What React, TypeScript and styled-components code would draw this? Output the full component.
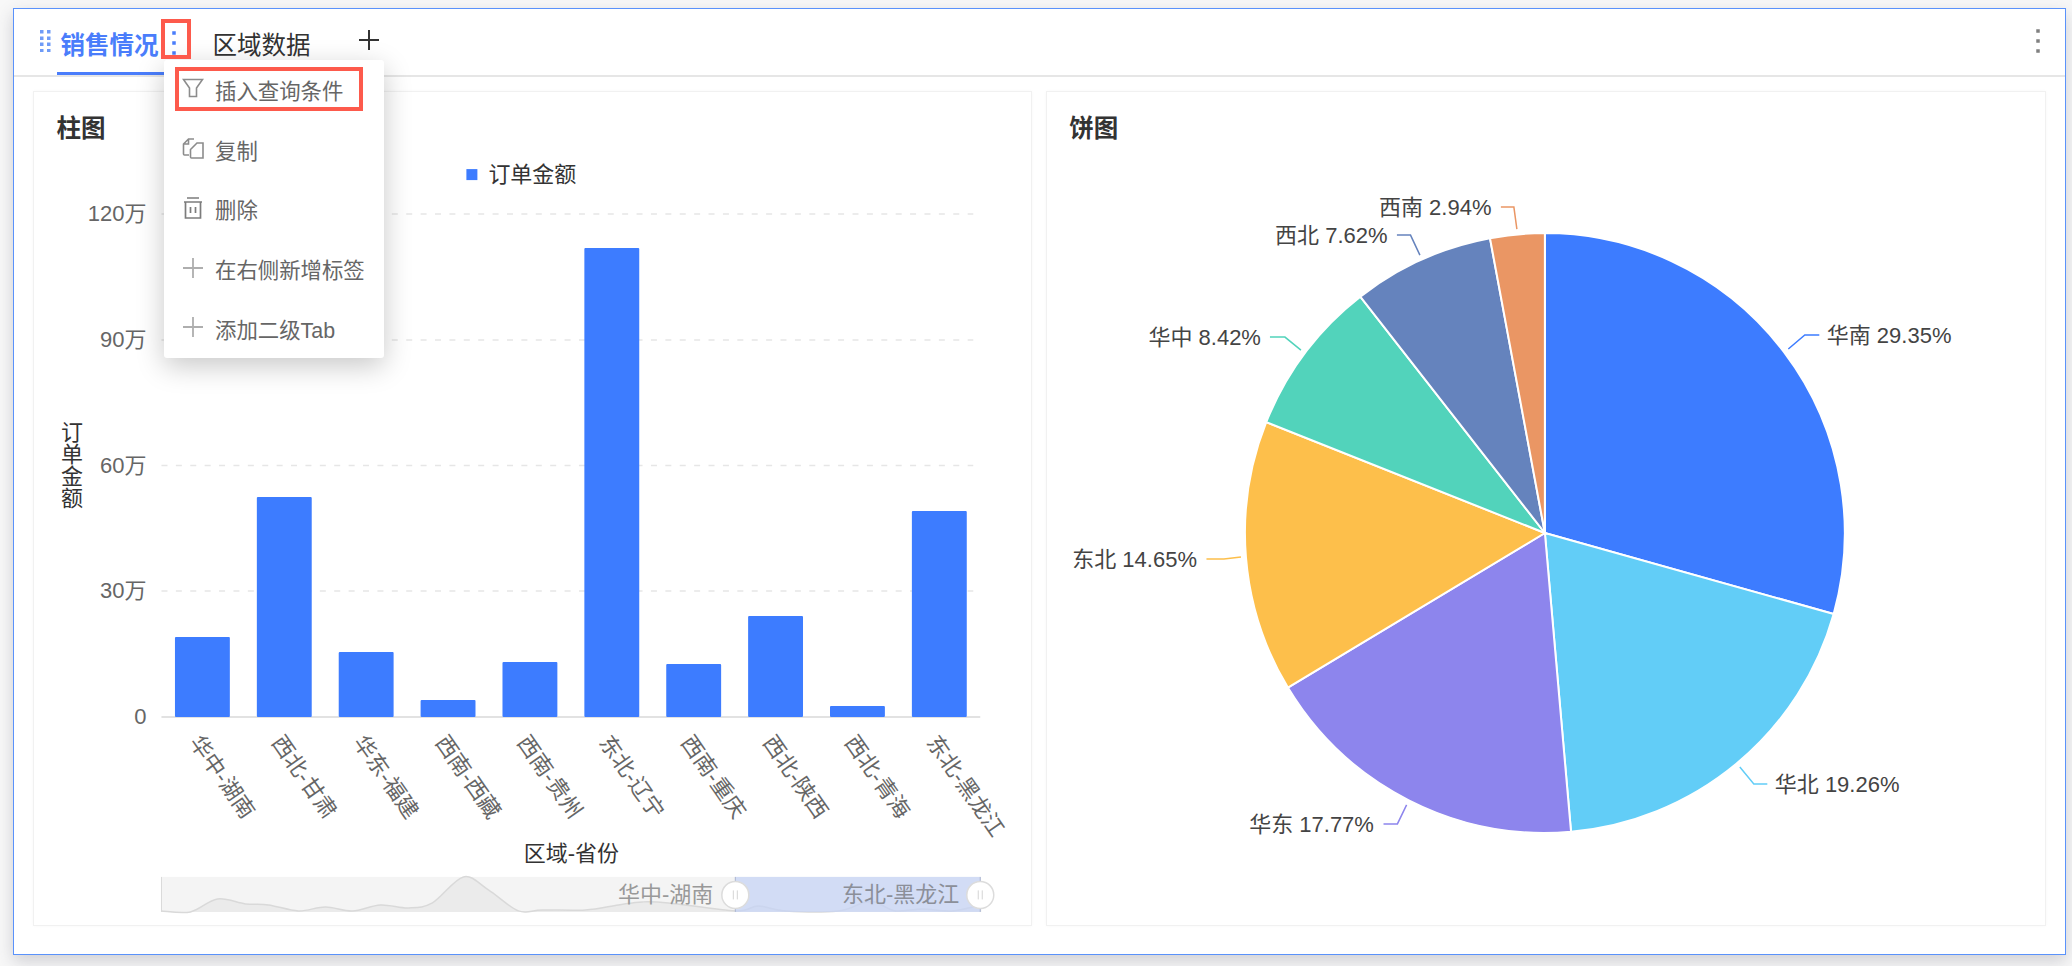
import React from 'react';
import styled, { createGlobalStyle } from 'styled-components';

const FONT = '"Liberation Sans", "Noto Sans CJK SC", sans-serif';
const BLUE = '#3d7cff';
const TAB_BLUE = '#4a7dfb';
const RED = '#fd5a4c';

const GlobalStyle = createGlobalStyle`
  html, body {
    margin: 0;
    padding: 0;
    background: #f8f8f8;
  }
  * {
    box-sizing: border-box;
  }
`;

const Page = styled.div`
  width: 2072px;
  height: 966px;
  padding: 8px 6px 11px 13px;
  overflow: hidden;
  font-family: ${FONT};
`;

const Panel = styled.section`
  position: relative;
  height: 100%;
  display: flex;
  flex-direction: column;
  background: #fff;
  border: 1.5px solid #5a92fb;
  box-shadow: 0 6px 16px rgba(60, 60, 80, 0.22);
`;

const TabBar = styled.header`
  height: 68px;
  flex: none;
  display: flex;
  align-items: flex-start;
  padding-left: 26px;
  border-bottom: 2px solid #e6e6e6;
`;

const Grip = styled.svg`
  width: 11px;
  height: 22px;
  margin-top: 21px;
  flex: none;
`;

const TabLabel = styled.div<{ $active?: boolean }>`
  position: relative;
  height: 66px;
  padding-top: 19px;
  font-size: 24.5px;
  line-height: 36px;
  white-space: nowrap;
  font-weight: ${(props) => (props.$active ? 700 : 400)};
  color: ${(props) => (props.$active ? TAB_BLUE : '#333')};
  margin-left: ${(props) => (props.$active ? '9.500px' : '36px')};

  &::after {
    content: '';
    display: ${(props) => (props.$active ? 'block' : 'none')};
    position: absolute;
    left: -4px;
    right: -8px;
    bottom: 0;
    height: 3px;
    background: ${TAB_BLUE};
  }
`;

const DotsButton = styled.svg`
  width: 6px;
  height: 26px;
  margin: 21px 0 0 12px;
  flex: none;
`;

const AddTab = styled.svg`
  width: 20px;
  height: 20px;
  margin: 21px 0 0 48px;
  flex: none;
`;

const PanelMenu = styled.svg`
  width: 6px;
  height: 26px;
  margin: 19px 24px 0 auto;
  flex: none;
`;

const Charts = styled.div`
  flex: 1;
  min-height: 0;
  display: grid;
  grid-template-columns: 1fr 1fr;
  gap: 14px;
  padding: 14px 19px 28px 18.5px;
`;

const Card = styled.article`
  display: flex;
  flex-direction: column;
  min-width: 0;
  background: #fff;
  border: 1px solid #f1f1f1;
  box-shadow: 0 0 3px rgba(0, 0, 0, 0.03);
`;

const CardTitle = styled.h3<{ $left: number }>`
  margin: 0;
  height: 64px;
  flex: none;
  padding: 18.5px 0 0 ${(props) => props.$left}px;
  font-size: 24.5px;
  line-height: 36px;
  font-weight: 700;
  color: #333;
`;

const ChartSvg = styled.svg`
  display: block;
  width: 100%;
  flex: 1;
  min-height: 0;
  font-family: ${FONT};
`;

const Menu = styled.ul`
  position: absolute;
  left: 150px;
  top: 51px;
  width: 220px;
  height: 298px;
  margin: 0;
  padding: 1px 0 0;
  list-style: none;
  background: #fff;
  border-radius: 3px;
  box-shadow: 0 8px 28px rgba(0, 0, 0, 0.22);
`;

const MenuItem = styled.li`
  height: 59.6px;
  display: flex;
  align-items: center;
  padding-left: 18px;
  font-size: 21.4px;
  color: #666;
  white-space: nowrap;
`;

const MenuIcon = styled.svg`
  width: 22px;
  height: 24px;
  margin: -4px 11px 0 0;
  flex: none;
`;

const MenuText = styled.span`
  margin-top: -2px;
`;

const Highlight = styled.div<{ $left: number; $top: number; $width: number; $height: number }>`
  position: absolute;
  left: ${(props) => props.$left}px;
  top: ${(props) => props.$top}px;
  width: ${(props) => props.$width}px;
  height: ${(props) => props.$height}px;
  border: 4px solid ${RED};
  pointer-events: none;
`;

const yTicks = [
  { label: '120万', y: 214 },
  { label: '90万', y: 340 },
  { label: '60万', y: 465.5 },
  { label: '30万', y: 591 },
];

const bars = [
  { name: '华中-湖南', top: 637 },
  { name: '西北-甘肃', top: 497 },
  { name: '华东-福建', top: 652 },
  { name: '西南-西藏', top: 700 },
  { name: '西南-贵州', top: 662 },
  { name: '东北-辽宁', top: 248 },
  { name: '西南-重庆', top: 664 },
  { name: '西北-陕西', top: 616 },
  { name: '西北-青海', top: 706 },
  { name: '东北-黑龙江', top: 511 },
];

const sparkPoints: [number, number][] = [
  [161, 911], [190, 912], [217, 899], [245, 904], [268, 905], [298, 911], [325, 907], [352, 911],
  [380, 905], [408, 908], [432, 903], [463, 877], [488, 890], [518, 911], [542, 910], [585, 910],
  [618, 905], [642, 902], [668, 903], [735, 911], [758, 906], [785, 911], [838, 911], [862, 903],
  [875, 902], [895, 911], [922, 909], [952, 911], [981, 905],
];

// catmull-rom through the overview points
const smoothLine = (points: [number, number][]) =>
  points.reduce((d, [x, y], i) => {
    if (i === 0) return `M${x} ${y}`;
    const p0 = points[Math.max(i - 2, 0)];
    const p1 = points[i - 1];
    const p3 = points[Math.min(i + 1, points.length - 1)];
    const c1x = p1[0] + (x - p0[0]) / 6;
    const c1y = p1[1] + (y - p0[1]) / 6;
    const c2x = x - (p3[0] - p1[0]) / 6;
    const c2y = y - (p3[1] - p1[1]) / 6;
    return `${d}C${c1x} ${c1y} ${c2x} ${c2y} ${x} ${y}`;
  }, '');

const sparkLine = smoothLine(sparkPoints);

const pieCenter = { x: 1545, y: 533 };
const pieRadius = 300;

const slices = [
  { name: '华南', value: 29.35, color: '#3d7cff', line: '1788.5,349 1805,335 1819.5,335', textX: 1827, textY: 335.5, anchor: 'start' },
  { name: '华北', value: 19.26, color: '#62cdf7', line: '1740,767 1754,784 1767.5,784', textX: 1775, textY: 784.5, anchor: 'start' },
  { name: '华东', value: 17.77, color: '#8d85ed', line: '1406.7,805 1397.5,824 1383.6,824', textX: 1374, textY: 824.5, anchor: 'end' },
  { name: '东北', value: 14.65, color: '#fdbf4b', line: '1241,557 1224,559 1206.5,559', textX: 1197, textY: 559.5, anchor: 'end' },
  { name: '华中', value: 8.42, color: '#52d3bb', line: '1301,350 1285,337 1270,337', textX: 1261, textY: 337.5, anchor: 'end' },
  { name: '西北', value: 7.62, color: '#6583bd', line: '1420,255 1410.6,235 1397,235', textX: 1387.6, textY: 235.5, anchor: 'end' },
  { name: '西南', value: 2.94, color: '#ea9664', line: '1517,229 1514,207 1501,207', textX: 1491.6, textY: 207.5, anchor: 'end' },
];

const polar = (percent: number) => {
  const angle = (percent / 100) * Math.PI * 2;
  return {
    x: pieCenter.x + pieRadius * Math.sin(angle),
    y: pieCenter.y - pieRadius * Math.cos(angle),
  };
};

const slicePath = (from: number, to: number) => {
  const a = polar(from);
  const b = polar(Math.min(to, 100));
  const large = to - from > 50 ? 1 : 0;
  return `M${pieCenter.x} ${pieCenter.y}L${a.x} ${a.y}A${pieRadius} ${pieRadius} 0 ${large} 1 ${b.x} ${b.y}Z`;
};

const BarChart = () => (
  <ChartSvg viewBox="33.5 156.5 998 768">
    <rect x={466} y={169} width={11} height={11} fill={BLUE} />
    <text x={488} y={174.5} dominantBaseline="central" fontSize={22} fill="#333">订单金额</text>

    {yTicks.map((tick) => (
      <g key={tick.label}>
        <line x1={161} x2={973} y1={tick.y} y2={tick.y} stroke="#e6e6e6" strokeWidth={1.5} strokeDasharray="6 8.4" />
        <text x={146} y={tick.y - 0.5} dominantBaseline="central" textAnchor="end" fontSize={22} fill="#666">{tick.label}</text>
      </g>
    ))}
    <text x={146} y={716.5} dominantBaseline="central" textAnchor="end" fontSize={22} fill="#666">0</text>

    <text x={69} y={421} fontSize={22} fill="#333" style={{ writingMode: 'vertical-rl', textOrientation: 'upright' }}>订单金额</text>

    <line x1={161} x2={980} y1={717} y2={717} stroke="#e2e2e2" strokeWidth={2} />
    {bars.map((bar, i) => {
      const x = 161 + 81.9 * i + 13.5;
      return <rect key={bar.name} x={x} y={bar.top} width={54.9} height={717 - bar.top} rx={1} fill={BLUE} />;
    })}
    {bars.map((bar, i) => {
      const x = 194.5 + 81.9 * i;
      return (
        <text key={bar.name} transform={`rotate(55 ${x} 738)`} x={x} y={738} dominantBaseline="central" fontSize={22} fill="#666">
          {bar.name}
        </text>
      );
    })}
    <text x={571} y={854} dominantBaseline="central" textAnchor="middle" fontSize={22} fill="#333">区域-省份</text>

    <rect x={161} y={877} width={819} height={35} fill="#f4f4f4" />
    <path d={`${sparkLine}L981 912L161 912Z`} fill="#ebebeb" />
    <path d={sparkLine} fill="none" stroke="#d9d9d9" strokeWidth={1.5} />
    <rect x={735} y={877} width={245} height={35} fill="#c5d2f5" fillOpacity={0.72} />
    <line x1={161} x2={161} y1={877} y2={912} stroke="#d9d9d9" />
    <line x1={735} x2={735} y1={877} y2={912} stroke="#a9b4cf" />
    <line x1={980} x2={980} y1={877} y2={912} stroke="#a9b4cf" />
    <text x={713} y={895} dominantBaseline="central" textAnchor="end" fontSize={22} fill="#999">华中-湖南</text>
    <text x={959} y={895} dominantBaseline="central" textAnchor="end" fontSize={22} fill="#8b8f99">东北-黑龙江</text>
    {[735, 980].map((cx) => (
      <g key={cx}>
        <circle cx={cx} cy={895} r={13.5} fill="#fff" stroke="#dcdcdc" strokeWidth={1.5} />
        <path d={`M${cx - 2} 890.5v9M${cx + 2} 890.5v9`} stroke="#d4d4d4" strokeWidth={1} />
      </g>
    ))}
  </ChartSvg>
);

const PieChart = () => {
  let start = 0;
  return (
    <ChartSvg viewBox="1047 156.5 998 768">
      {slices.map((slice) => {
        const end = start + slice.value;
        const d = slicePath(start, end);
        start = end;
        return <path key={slice.name} d={d} fill={slice.color} stroke="#fff" strokeWidth={2} />;
      })}
      {slices.map((slice) => (
        <g key={slice.name}>
          <polyline points={slice.line} fill="none" stroke={slice.color} strokeWidth={1.5} />
          <text
            x={slice.textX}
            y={slice.textY}
            dominantBaseline="central"
            textAnchor={slice.anchor as 'start' | 'end'}
            fontSize={22}
            fill="#444">
            {slice.name} {slice.value.toFixed(2)}%
          </text>
        </g>
      ))}
    </ChartSvg>
  );
};

const VerticalDots = ({ color }: { color: string }) => (
  <>
    <rect x={1.25} y={1.25} width={3.5} height={3.5} fill={color} />
    <rect x={1.25} y={11.25} width={3.5} height={3.5} fill={color} />
    <rect x={1.25} y={21.25} width={3.5} height={3.5} fill={color} />
  </>
);

const App = (): React.ReactElement => (
  <Page>
    <GlobalStyle />
    <Panel>
      <TabBar>
        <Grip viewBox="0 0 11 22">
          {[0, 6.5, 12.5, 19].map((y) => (
            <g key={y} fill="#6f9bf7">
              <rect x={0} y={y} width={3.5} height={3.5} />
              <rect x={7} y={y} width={3.5} height={3.5} />
            </g>
          ))}
        </Grip>
        <TabLabel $active>销售情况</TabLabel>
        <DotsButton viewBox="0 0 6 26">
          <VerticalDots color={TAB_BLUE} />
        </DotsButton>
        <TabLabel>区域数据</TabLabel>
        <AddTab viewBox="0 0 20 20">
          <path d="M10 0v20M0 10h20" stroke="#333" strokeWidth={2} />
        </AddTab>
        <PanelMenu viewBox="0 0 6 26">
          <VerticalDots color="#808080" />
        </PanelMenu>
      </TabBar>

      <Charts>
        <Card>
          <CardTitle $left={23}>柱图</CardTitle>
          <BarChart />
        </Card>
        <Card>
          <CardTitle $left={22}>饼图</CardTitle>
          <PieChart />
        </Card>
      </Charts>

      <Menu>
        <MenuItem>
          <MenuIcon viewBox="0 0 22 24">
            <path d="M1.500 2.500h19l-6 8.500v8.500h-7v-8.500z" fill="none" stroke="#8c8c8c" strokeWidth={1.6} />
          </MenuIcon>
          <MenuText>插入查询条件</MenuText>
        </MenuItem>
        <MenuItem>
          <MenuIcon viewBox="0 0 22 24">
            <path
              d="M7 19H2.500a1 1 0 0 1-1-1V8L6.500 3H12M15 7h6v15H9.500a1 1 0 0 1-1-1V13.500zM6.500 3v5H1.500"
              fill="none"
              stroke="#8c8c8c"
              strokeWidth={1.6}
            />
          </MenuIcon>
          <MenuText>复制</MenuText>
        </MenuItem>
        <MenuItem>
          <MenuIcon viewBox="0 0 22 24">
            <path d="M5 2h12M2 6h18M3.500 6v16h15V6M8.500 11v6M13.500 11v6" fill="none" stroke="#7c7c7c" strokeWidth={1.7} />
          </MenuIcon>
          <MenuText>删除</MenuText>
        </MenuItem>
        <MenuItem>
          <MenuIcon viewBox="0 0 22 24">
            <path d="M11 2v20M1 12h20" stroke="#aeaeae" strokeWidth={1.8} />
          </MenuIcon>
          <MenuText>在右侧新增标签</MenuText>
        </MenuItem>
        <MenuItem>
          <MenuIcon viewBox="0 0 22 24">
            <path d="M11 2v20M1 12h20" stroke="#aeaeae" strokeWidth={1.8} />
          </MenuIcon>
          <MenuText>添加二级Tab</MenuText>
        </MenuItem>
      </Menu>

      <Highlight $left={147} $top={10} $width={30} $height={40} />
      <Highlight $left={161} $top={58} $width={188} $height={44} />
    </Panel>
  </Page>
);

export default App;
